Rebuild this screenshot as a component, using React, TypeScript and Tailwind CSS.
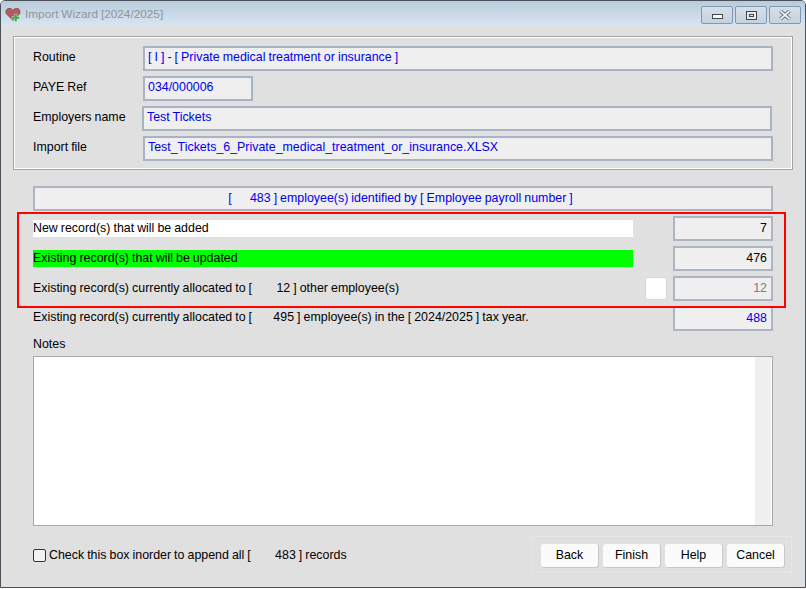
const font = { fontFamily: '"Liberation Sans", Arial, sans-serif' };

const Field = ({ left, width, value }: { left: string; width: string; value: string }) => (
  <div className={`${left} ${width} h-[25px] shrink-0 border-2 border-[#a9b3c2] border-t-[#a8b4c6] bg-[#efefef] pl-[3px] pb-[2px] flex items-center text-[12.4px] text-[#0000ee]`}>
    <span className="w-full whitespace-pre">{value}</span>
  </div>
);

const Count = ({ value, tone = "text-black" }: { value: string; tone?: string }) => (
  <div className={`w-[100px] h-[25px] shrink-0 border-2 border-[#adb5c0] bg-[#efefef] pr-[4px] flex items-center justify-end text-[12.4px] ${tone}`}>{value}</div>
);

const TopRow = ({ label, fieldClass, width, value }: { label: string; fieldClass: string; width: string; value: string }) => (
  <div className="flex items-start h-[25px]">
    <span className="w-[100px] shrink-0 text-[12.4px] leading-[22px] text-black whitespace-nowrap">{label}</span>
    <Field left={fieldClass} width={width} value={value} />
  </div>
);

const Btn = ({ label }: { label: string }) => (
  <button className="w-[58px] h-[24px] pt-[1px] rounded-[3px] bg-[#fbfbfb] border-b border-r border-[#c8c8c8] text-[12.4px] text-black">{label}</button>
);

const winBtn = "w-[32px] h-[18px] rounded-[2px] border border-[#8297b0] bg-gradient-to-b from-[#d5dfe8] to-[#c4d2df] flex items-center justify-center";

export default function App() {
  return (
    <div style={font} className="relative w-[806px] h-[588px] bg-[#e0e0e0] border border-[#4a5058] rounded-t-[5px] overflow-hidden flex flex-col [word-spacing:-0.4px]">
      <div className="h-[25px] shrink-0 bg-gradient-to-b from-[#b9cbdc] to-[#d9e6f2] flex items-center justify-between">
        <div className="flex items-center">
          <svg width="16" height="15" viewBox="0 0 16 15" className="ml-[4px] mr-[4px] mt-[2px]">
            <path d="M8 13.5 L1.5 7 C-0.5 4 2 1 5 1.4 C6.5 1.6 7.5 2.4 8 3.4 C8.5 2.4 9.5 1.6 11 1.4 C14 1 16 4 14.5 7 Z" fill="#bd5660" stroke="#6a4a4a" strokeWidth="0.7" />
            <path d="M9.5 7 h2.5 v2.5 h2.5 v2.5 h-2.5 v2.5 h-2.5 v-2.5 h-2.5 v-2.5 h2.5 z" fill="#46a552" stroke="#e8f5e8" strokeWidth="0.4" />
          </svg>
          <span className="text-[11.8px] text-[#8f959c] mt-[2px]">Import Wizard [2024/2025]</span>
        </div>
        <div className="flex items-center gap-[2px] mr-[4px] mt-[3px]">
          <div className={winBtn}>
            <div className="w-[11px] h-[5px] mt-[3px] border border-[#3f4650] bg-white" />
          </div>
          <div className={winBtn}>
            <div className="w-[11px] h-[9px] border border-[#3f4650] bg-[#e4e9ee] flex items-center justify-center">
              <div className="w-[5px] h-[3px] border border-[#3f4650]" />
            </div>
          </div>
          <div className={winBtn}>
            <svg width="12" height="10" viewBox="0 0 12 10">
              <path d="M1.5 1 L10.5 9 M10.5 1 L1.5 9" stroke="#4a5058" strokeWidth="3.4" />
              <path d="M1.5 1 L10.5 9 M10.5 1 L1.5 9" stroke="#f4f6f8" strokeWidth="1.8" />
            </svg>
          </div>
        </div>
      </div>

      <div className="ml-[12px] mr-[12px] mt-[10px] h-[134px] border border-[#a4a4a4] outline outline-1 outline-offset-[-2px] outline-white px-[19px] pt-[9px] flex flex-col gap-[5px]">
        <TopRow label="Routine" fieldClass="ml-[10px]" width="w-[630px]" value="[ I ] - [ Private medical treatment or insurance ]" />
        <TopRow label="PAYE Ref" fieldClass="ml-[10px]" width="w-[110px]" value="034/000006" />
        <TopRow label="Employers name" fieldClass="ml-[9px]" width="w-[630px]" value="Test Tickets" />
        <TopRow label="Import file" fieldClass="ml-[10px]" width="w-[630px]" value="Test_Tickets_6_Private_medical_treatment_or_insurance.XLSX" />
      </div>

      <div className="ml-[32px] w-[740px] mt-[16px] h-[25px] border-2 border-[#adb5c0] bg-[#efefef] pb-[1px] pr-[5px] flex items-center justify-center text-[12.4px] text-[#0000ee] whitespace-pre">
        {"[      483 ] employee(s) identified by [ Employee payroll number ]"}
      </div>

      <div className="ml-[32px] w-[740px] mt-[5px] flex flex-col gap-[5px] text-[12.4px] text-black">
        <div className="flex items-center justify-between h-[25px]">
          <div className="w-[600px] h-[17px] bg-white leading-[16px]">New record(s) that will be added</div>
          <Count value="7" />
        </div>
        <div className="flex items-center justify-between h-[25px]">
          <div className="w-[600px] h-[17px] bg-[#00ff00] leading-[16px]">Existing record(s) that will be updated</div>
          <Count value="476" />
        </div>
        <div className="flex items-center h-[25px]">
          <div className="w-[612px] whitespace-pre pb-[1px]">{"Existing record(s) currently allocated to [        12 ] other employee(s)"}</div>
          <div className="w-[22px] h-[23px] rounded-[3px] bg-white border border-[#d8d8d8]" />
          <div className="ml-[6px]"><Count value="12" tone="text-[#71837a]" /></div>
        </div>
        <div className="flex items-center h-[25px]">
          <div className="w-[640px] whitespace-pre pb-[3px]">{"Existing record(s) currently allocated to [       495 ] employee(s) in the [ 2024/2025 ] tax year."}</div>
          <Count value="488" tone="text-[#0000ee]" />
        </div>
      </div>

      <div className="ml-[32px] mt-[5px] h-[20px] text-[12.4px] leading-[16px] text-black">Notes</div>
      <div className="ml-[32px] w-[740px] h-[170px] border border-[#a8a8a8] bg-white flex justify-end">
        <div className="w-[17px] h-full bg-[#f0f0f0] border-r border-white" />
      </div>

      <div className="ml-[32px] mr-[13px] mt-[10px] flex items-center justify-between">
        <label className="flex items-center text-[12.4px] text-black whitespace-pre pt-[2px]">
          <span className="w-[13px] h-[13px] rounded-[2px] border border-[#333] bg-[#f2f2f2] mr-[3px]" />
          {"Check this box inorder to append all [        483 ] records"}
        </label>
        <div className="w-[261px] h-[37px] border border-[#e6e6e6] pl-[9px] pt-[2px] flex items-center gap-[4px]">
          <Btn label="Back" />
          <Btn label="Finish" />
          <Btn label="Help" />
          <Btn label="Cancel" />
        </div>
      </div>

      {/* annotation drawn over the screenshot */}
      <div className="absolute left-[16px] top-[211px] w-[769px] h-[96px] border-2 border-[#ff0000] pointer-events-none" />
    </div>
  );
}
